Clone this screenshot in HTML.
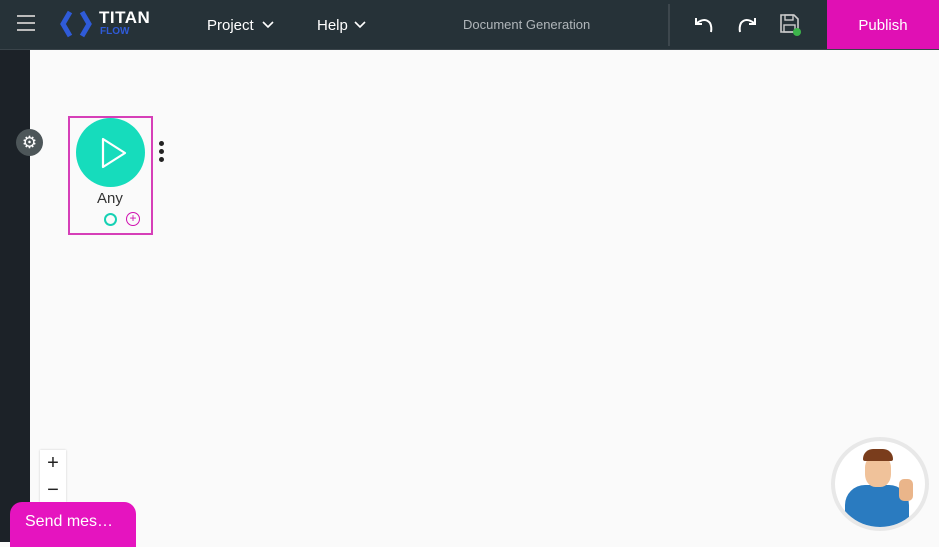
<!DOCTYPE html>
<html><head><style>
*{margin:0;padding:0;box-sizing:border-box}
body{width:939px;height:542px;overflow:hidden;background:#fafafa;font-family:"Liberation Sans",sans-serif;position:relative}
.top{position:absolute;left:0;top:0;width:939px;height:50px;background:#263238;border-bottom:1px solid #3a444a}
.side{position:absolute;left:0;top:50px;width:30px;height:492px;background:#1c2228}
.t{position:absolute;color:#fff}
</style></head><body>
<div class="top">
  <div style="position:absolute;left:17px;top:15px;width:18px;height:2px;background:#bbb"></div>
  <div style="position:absolute;left:17px;top:22px;width:18px;height:2px;background:#bbb"></div>
  <div style="position:absolute;left:17px;top:29px;width:18px;height:2px;background:#bbb"></div>
  <svg style="position:absolute;left:60px;top:10px" width="32" height="28" viewBox="0 0 32 28"><path d="M10 2 L3 14 L10 26" fill="none" stroke="#2f5bd8" stroke-width="5"/><path d="M22 2 L29 14 L22 26" fill="none" stroke="#2f5bd8" stroke-width="5"/></svg>
  <div class="t" style="left:99px;top:8px;font-size:17px;font-weight:bold;letter-spacing:0.5px">TITAN</div>
  <div class="t" style="left:100px;top:26px;font-size:10px;font-weight:bold;color:#2f5bd8">FLOW</div>
  <div class="t" style="left:207px;top:17px;font-size:15px">Project</div>
  <svg style="position:absolute;left:262px;top:21px" width="12" height="8"><path d="M1 1 L6 6 L11 1" fill="none" stroke="#fff" stroke-width="1.6"/></svg>
  <div class="t" style="left:317px;top:17px;font-size:15px">Help</div>
  <svg style="position:absolute;left:354px;top:21px" width="12" height="8"><path d="M1 1 L6 6 L11 1" fill="none" stroke="#fff" stroke-width="1.6"/></svg>
  <div class="t" style="left:463px;top:17px;font-size:13px;color:#b0b6ba">Document Generation</div>
  <div style="position:absolute;left:668px;top:4px;width:2px;height:42px;background:#3d474d"></div>
  <svg style="position:absolute;left:693px;top:15px" width="22" height="20"><path d="M4 8 Q12 2 17 8 Q19 12 18 17" fill="none" stroke="#fff" stroke-width="2"/><path d="M3 3 L3 9 L9 9" fill="none" stroke="#fff" stroke-width="2"/></svg>
  <svg style="position:absolute;left:736px;top:15px" width="22" height="20"><path d="M18 8 Q10 2 5 8 Q3 12 4 17" fill="none" stroke="#fff" stroke-width="2"/><path d="M19 3 L19 9 L13 9" fill="none" stroke="#fff" stroke-width="2"/></svg>
  <svg style="position:absolute;left:779px;top:13px" width="24" height="24"><path d="M2 2 H15 L19 6 V19 H2 Z" fill="none" stroke="#ccc" stroke-width="1.6"/><rect x="6" y="2" width="8" height="5" fill="none" stroke="#ccc" stroke-width="1.4"/><rect x="5" y="12" width="11" height="7" fill="none" stroke="#ccc" stroke-width="1.4"/><circle cx="18" cy="19" r="4" fill="#3cb44b"/></svg>
  <div style="position:absolute;left:827px;top:0;width:112px;height:49px;background:#e010b4;color:#fff;font-size:15px;text-align:center;line-height:51px">Publish</div>
</div>
<div class="side"></div>
<div style="position:absolute;left:16px;top:129px;width:27px;height:27px;border-radius:50%;background:#4d5659;color:#fff;font-size:17px;text-align:center;line-height:27px">&#9881;</div>
<div style="position:absolute;left:68px;top:116px;width:85px;height:119px;border:2px solid #d63fb8"></div>
<div style="position:absolute;left:76px;top:118px;width:69px;height:69px;border-radius:50%;background:#16dcbc"></div>
<svg style="position:absolute;left:100px;top:137px" width="28" height="32"><path d="M3 2 L25 16 L3 30 Z" fill="none" stroke="#fff" stroke-width="2.2" stroke-linejoin="round"/></svg>
<div style="position:absolute;left:97px;top:190px;font-size:15px;color:#333">Any</div>
<div style="position:absolute;left:104px;top:213px;width:13px;height:13px;border-radius:50%;border:2.5px solid #16d1b4"></div>
<div style="position:absolute;left:126px;top:212px;width:14px;height:14px;border-radius:50%;border:1.5px solid #d010b0;color:#d010b0;font-size:12px;line-height:11px;text-align:center">+</div>
<div style="position:absolute;left:159px;top:141px;width:5px;height:5px;border-radius:50%;background:#222"></div>
<div style="position:absolute;left:159px;top:149px;width:5px;height:5px;border-radius:50%;background:#222"></div>
<div style="position:absolute;left:159px;top:157px;width:5px;height:5px;border-radius:50%;background:#222"></div>
<div style="position:absolute;left:40px;top:450px;width:26px;height:52px;background:#fff;box-shadow:0 0 2px #ccc"></div>
<div style="position:absolute;left:40px;top:452px;width:26px;text-align:center;font-size:20px;color:#222">+</div>
<div style="position:absolute;left:40px;top:479px;width:26px;text-align:center;font-size:20px;color:#222">&minus;</div>
<div style="position:absolute;left:10px;top:502px;width:126px;height:45px;background:#e514bf;border-radius:12px 12px 0 0;color:#fff;font-size:16px;padding:11px 0 0 15px">Send mes…</div>
<div style="position:absolute;left:831px;top:437px;width:98px;height:94px;border-radius:50%;background:#fff;border:4px solid #e8e8e8;overflow:hidden">
  <div style="position:absolute;left:10px;top:44px;width:64px;height:46px;background:#2a7bc0;border-radius:20px 20px 0 0"></div>
  <div style="position:absolute;left:30px;top:14px;width:26px;height:32px;background:#f0c29a;border-radius:40%"></div>
  <div style="position:absolute;left:28px;top:8px;width:30px;height:12px;background:#7a3d1c;border-radius:10px 10px 2px 2px"></div>
  <div style="position:absolute;left:64px;top:38px;width:14px;height:22px;background:#eab58a;border-radius:5px"></div>
</div>
</body></html>
